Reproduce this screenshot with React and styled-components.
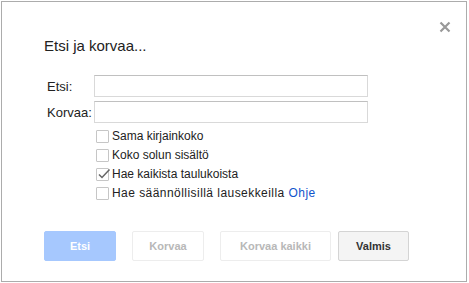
import * as React from 'react';
import styled, { createGlobalStyle } from 'styled-components';

const GlobalStyle = createGlobalStyle`
    html, body {
        margin: 0;
        padding: 0;
        background: #fff;
    }
    body {
        font-family: Arial, "Liberation Sans", sans-serif;
        color: #222;
    }
`;

const Dialog = styled.div`
    position: relative;
    box-sizing: border-box;
    width: 466px;
    height: 281px;
    margin: 1px 0 0 1px;
    border: 1px solid #acacac;
    background: #fff;
    padding: 35px 42px 0 42px;
`;

const Close = styled.button`
    position: absolute;
    top: 16px;
    right: 12px;
    width: 18px;
    height: 18px;
    padding: 0;
    border: 0;
    background: none;
    display: flex;
    align-items: center;
    justify-content: center;
    cursor: pointer;
`;

const Title = styled.h1`
    margin: 0;
    font-size: 15px;
    line-height: 18px;
    font-weight: normal;
    color: #222;
`;

const Form = styled.div`
    margin-top: 20px;
    display: grid;
    grid-template-columns: 50px 274px;
    row-gap: 4px;
    align-items: center;
`;

const Label = styled.label`
    font-size: 13px;
    padding-left: 3px;
    color: #222;
`;

const Field = styled.input`
    box-sizing: border-box;
    width: 274px;
    height: 22px;
    margin: 0;
    border: 1px solid #d9d9d9;
    border-top-color: #c0c0c0;
    padding: 1px 6px;
    font: 13px Arial, "Liberation Sans", sans-serif;
    outline: none;
`;

const Options = styled.div`
    margin: 7px 0 0 52px;
    display: flex;
    flex-direction: column;
    gap: 6px;
`;

const Option = styled.label`
    display: flex;
    align-items: center;
    gap: 3px;
    font-size: 12px;
    line-height: 13px;
    color: #222;
`;

const OptionText = styled.span`
    letter-spacing: ${(p) => (p.$wide ? '0.45px' : 'normal')};
`;

const Box = styled.span`
    box-sizing: border-box;
    width: 13px;
    height: 13px;
    border: 1px solid #c6c6c6;
    border-radius: 1px;
    position: relative;
    flex: none;
`;

const Link = styled.a`
    color: #15c;
    text-decoration: none;
`;

const Buttons = styled.div`
    margin-top: 31px;
    display: flex;
    gap: 16px;
`;

const Button = styled.button`
    box-sizing: border-box;
    min-width: ${(p) => p.$w || 72}px;
    height: 30px;
    padding: 0 12px;
    margin-left: ${(p) => p.$ml || 0}px;
    border-radius: 2px;
    font: bold 11px Arial, "Liberation Sans", sans-serif;
    border: 1px solid ${(p) => (p.$primary ? '#a6c8fe' : p.$active ? '#d4d4d4' : '#ededed')};
    background: ${(p) => (p.$primary ? '#a6c8fe' : p.$active ? '#f4f4f4' : '#fff')};
    color: ${(p) => (p.$primary ? '#fff' : p.$active ? '#333' : '#b8b8b8')};
`;

function Check({ checked }) {
    return (
        <Box>
            {checked && (
                <svg width="15" height="13" viewBox="0 0 15 13" style={{ position: 'absolute', left: 0, top: -2 }}>
                    <path d="M2 7.5 L5 10.5 L12.5 2.5" fill="none" stroke="#666" strokeWidth="1.5" />
                </svg>
            )}
        </Box>
    );
}

export default function App() {
    return (
        <>
            <GlobalStyle />
            <Dialog>
                <Close aria-label="Sulje">
                    <svg width="12" height="12" viewBox="0 0 12 12">
                        <path d="M1.5 1.5 L10.5 10.5 M10.5 1.5 L1.5 10.5" stroke="#999" strokeWidth="2.2" />
                    </svg>
                </Close>
                <Title>Etsi ja korvaa...</Title>
                <Form>
                    <Label>Etsi:</Label>
                    <Field />
                    <Label>Korvaa:</Label>
                    <Field />
                </Form>
                <Options>
                    <Option><Check /><OptionText>Sama kirjainkoko</OptionText></Option>
                    <Option><Check /><OptionText>Koko solun sisältö</OptionText></Option>
                    <Option><Check checked /><OptionText>Hae kaikista taulukoista</OptionText></Option>
                    <Option>
                        <Check />
                        <OptionText $wide>Hae säännöllisillä lausekkeilla <Link href="#">Ohje</Link></OptionText>
                    </Option>
                </Options>
                <Buttons>
                    <Button $primary>Etsi</Button>
                    <Button>Korvaa</Button>
                    <Button $w={111}>Korvaa kaikki</Button>
                    <Button $active $ml={-9} $w={71}>Valmis</Button>
                </Buttons>
            </Dialog>
        </>
    );
}
